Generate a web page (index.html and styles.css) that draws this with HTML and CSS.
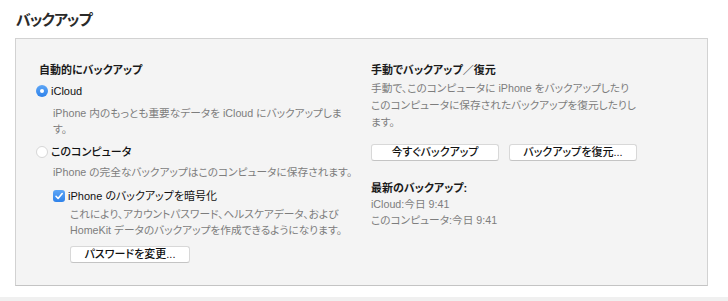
FILE: index.html
```html
<!DOCTYPE html>
<html lang="ja">
<head>
<meta charset="utf-8">
<link rel="stylesheet" href="styles.css">
</head>
<body>
<div class="page">
  <h1 class="title">バックアップ</h1>
  <div class="panel">
    <div class="col col-left">
      <div class="heading">自動的にバックアップ</div>
      <div class="option option-first">
        <span class="radio radio-on"></span><span class="label">iCloud</span>
      </div>
      <p class="desc desc-first">iPhone 内のもっとも重要なデータを iCloud にバックアップしま<br>す。</p>
      <div class="option option-second">
        <span class="radio"></span><span class="label label-strong">このコンピュータ</span>
      </div>
      <p class="desc desc-second">iPhone の完全なバックアップはこのコンピュータに保存されます。</p>
      <div class="option option-check">
        <span class="checkbox"><svg viewBox="0 0 12 12" width="12" height="12"><path d="M3 6.3 L5.1 8.5 L9.2 3.6" fill="none" stroke="#fff" stroke-width="1.6" stroke-linecap="round" stroke-linejoin="round"/></svg></span><span class="label">iPhone のバックアップを暗号化</span>
      </div>
      <p class="desc desc-check">これにより、アカウントパスワード、ヘルスケアデータ、および<br>HomeKit データのバックアップを作成できるようになります。</p>
      <div class="btn-row btn-row-left">
        <button class="btn btn-pass">パスワードを変更...</button>
      </div>
    </div>
    <div class="col col-right">
      <div class="heading">手動でバックアップ／復元</div>
      <p class="desc desc-manual">手動で、このコンピュータに iPhone をバックアップしたり<br>このコンピュータに保存されたバックアップを復元したりし<br>ます。</p>
      <div class="btn-row btn-row-right">
        <button class="btn btn-wide">今すぐバックアップ</button>
        <button class="btn btn-wide">バックアップを復元...</button>
      </div>
      <div class="heading heading-latest">最新のバックアップ:</div>
      <p class="desc desc-latest">iCloud:今日 9:41<br>このコンピュータ:今日 9:41</p>
    </div>
  </div>
  <div class="bottom-bar"></div>
</div>
</body>
</html>
```

FILE: styles.css
```css
html, body {
  margin: 0;
  padding: 0;
  background: #ffffff;
}

body {
  font-family: "Liberation Sans", "Noto Sans CJK JP", sans-serif;
  font-feature-settings: "palt";
  color: #1c1c1c;
  width: 728px;
  height: 301px;
  overflow: hidden;
}

.page {
  display: flex;
  flex-direction: column;
  height: 301px;
}

.title {
  margin: 10px 0 0 16px;
  font-size: 15px;
  line-height: 20px;
  font-weight: 700;
  letter-spacing: -1px;
  color: #2a2a2a;
}

.panel {
  margin: 8px 20px 0 15px;
  height: 248px;
  box-sizing: border-box;
  background: #f4f4f4;
  border: 1px solid #d2d2d2;
  border-bottom-color: #c4c4c4;
  padding: 23px 23px 0 23px;
  display: grid;
  grid-template-columns: 332px 1fr;
  align-items: start;
}

.col {
  display: flex;
  flex-direction: column;
  align-items: flex-start;
}

.heading {
  font-size: 11px;
  line-height: 16px;
  font-weight: 700;
  color: #1a1a1a;
  white-space: nowrap;
}

.option {
  display: flex;
  align-items: center;
  height: 16px;
  font-size: 11px;
  white-space: nowrap;
}

.option-first {
  margin-top: 5px;
  transform: none;
}

.option-second {
  margin-top: 7px;
}

.option-check {
  margin-top: 8px;
  margin-left: 14px;
}

.label {
  line-height: 16px;
  color: #111;
  font-weight: 400;
}

.label-strong {
  font-weight: 500;
}

.radio {
  width: 12px;
  height: 12px;
  box-sizing: border-box;
  border-radius: 50%;
  margin-left: -3px;
  margin-right: 3px;
  background: #fff;
  border: 1px solid #d6d6d6;
  position: relative;
}

.radio-on {
  border: none;
  background: linear-gradient(#5ea6f6, #2e82ea);
}

.radio-on::after {
  content: "";
  position: absolute;
  left: 4px;
  top: 4px;
  width: 4px;
  height: 4px;
  border-radius: 50%;
  background: #fff;
}

.checkbox {
  width: 12px;
  height: 12px;
  border-radius: 3px;
  background: linear-gradient(#5ea6f6, #2e82ea);
  margin-right: 3px;
  display: flex;
}

.desc {
  margin: 0;
  font-size: 10.7px;
  line-height: 16px;
  color: #7d7d7d;
  white-space: nowrap;
}

.desc-first {
  margin-top: 6px;
  padding-left: 14px;
}

.desc-second {
  margin-top: 4px;
  padding-left: 14px;
}

.desc-check {
  margin-top: 2px;
  padding-left: 31px;
}

.desc-manual {
  margin-top: 2px;
  line-height: 17px;
}

.desc-latest {
  margin-top: 0;
}

.btn-row {
  display: flex;
  gap: 10px;
}

.btn-row-left {
  margin-top: 8px;
  padding-left: 31px;
}

.btn-row-right {
  margin-top: 13px;
}

.heading-latest {
  margin-top: 19px;
}

.btn {
  height: 17px;
  padding: 0;
  border: 1px solid #d8d8d8;
  border-bottom-color: #c4c4c4;
  border-radius: 3px;
  background: #ffffff;
  font-family: "Liberation Sans", "Noto Sans CJK JP", sans-serif;
  font-feature-settings: "palt";
  font-size: 11px;
  font-weight: 500;
  line-height: 15px;
  color: #111;
}

.btn-pass {
  width: 120px;
}

.btn-wide {
  width: 128px;
}

.bottom-bar {
  margin-top: auto;
  height: 4px;
  background: #f0f0f0;
}
```
